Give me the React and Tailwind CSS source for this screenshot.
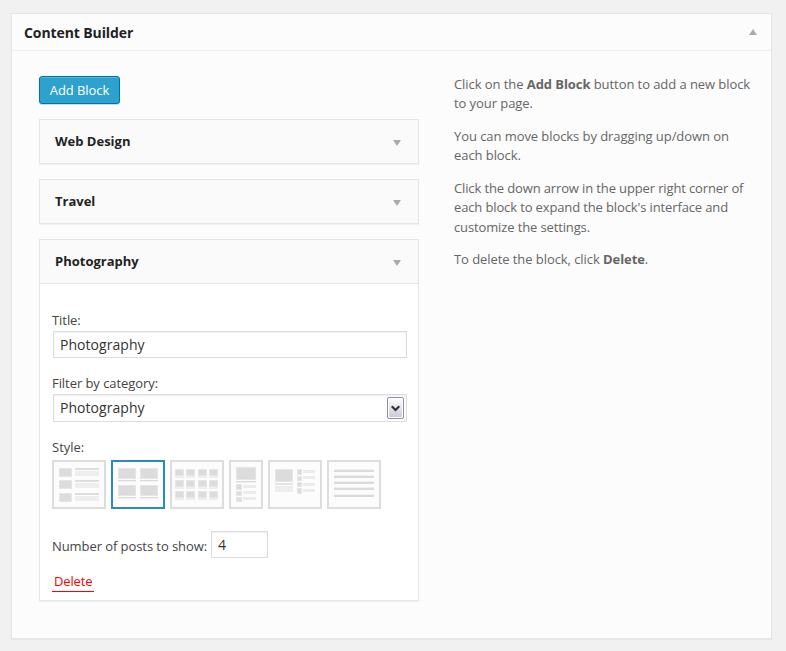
import React from "react";

function Thumb({ width, active, bars }) {
  return (
    <div
      className={
        "h-[49px] shrink-0 border-2 bg-[#fcfcfc] " +
        (active ? "border-[#298cba]" : "border-[#dddddd]")
      }
      style={{ width }}
    >
      <svg className="block" width={width - 4} height="45" shapeRendering="crispEdges">
        {bars.map(([x, y, w, h, fill], i) => (
          <rect key={i} x={x} y={y} width={w} height={h} fill={fill || "#dddddd"} />
        ))}
      </svg>
    </div>
  );
}

const LIGHT = "#eeeeee";
const MID = "#e6e6e6";

// A picture tile with a soft one-pixel rim.
const tile = (x, y, w, h) => [
  [x, y, w, h, MID],
  [x + 1, y + 1, w - 2, h - 2, "#dcdcdc"],
];

const listThumb = [6, 18, 31].flatMap((y) => [
  ...tile(5, y, 13, 9),
  [21, y, 24, 2, "#dedede"],
  [21, y + 3, 24, 5, LIGHT],
]);

const gridThumb = [
  [6, 18],
  [23, 35],
].flatMap(([y, line]) =>
  [5, 27].flatMap((x) => [
    ...tile(x, y, 18, 11),
    [x, line, 18, 1, "#dadada"],
    [x, line + 1, 18, 1, "#f3f3f3"],
  ])
);

const smallGridThumb = [7, 18, 29].flatMap((y) =>
  [3, 14, 26, 37].flatMap((x) => [...tile(x, y, 9, 7), [x, y + 7, 9, 2, LIGHT]])
);

const columnThumb = [
  ...tile(5, 5, 20, 13),
  [5, 19, 20, 1, "#dadada"],
  [5, 20, 20, 1, LIGHT],
  ...[
    [22, 6],
    [29, 5],
    [35, 5],
  ].flatMap(([y, h]) => tile(5, y, 6, h)),
  ...[23, 29, 35].map((y) => [12, y, 13, 3, "#ebebeb"]),
];

const featureThumb = [
  ...tile(5, 7, 18, 13),
  [5, 21, 18, 2, MID],
  [5, 24, 18, 6, LIGHT],
  ...[
    [7, 6],
    [14, 5],
    [20, 5],
    [26, 6],
  ].flatMap(([y, h]) => tile(27, y, 5, h)),
  ...[8, 14, 21, 27].map((y) => [33, y, 12, 3, "#ebebeb"]),
];

const linesThumb = [8, 14, 20, 26, 33].flatMap((y) => [
  [5, y - 1, 40, 1, "#f0f0f0"],
  [5, y, 40, 2, "#dadada"],
]);

function Triangle({ up }) {
  return (
    <svg width="8" height="6" className="block" fill="#aaaaaa">
      <path d={up ? "M4 0L8 6H0Z" : "M0 0H8L4 6Z"} />
    </svg>
  );
}

function BlockHeader({ title }) {
  return (
    <div className="flex h-[43px] items-center justify-between bg-[#fafafa] pl-[15px] pr-[17px]">
      <h3 className="pb-[2px] text-[13px] leading-[18px] font-bold text-[#222222]">{title}</h3>
      <div className="pt-[3px]">
        <Triangle />
      </div>
    </div>
  );
}

const blockClass =
  "border border-[#e5e5e5] bg-white shadow-[0_1px_1px_rgba(0,0,0,0.04)]";
const fieldClass =
  "border border-[#dddddd] bg-white text-[14px] tracking-[0.05px] text-[#333333] shadow-[inset_0_1px_2px_rgba(0,0,0,0.07)] outline-none";

export default function App() {
  return (
    <div className="h-[651px] w-[786px] overflow-hidden bg-[#f1f1f1] pt-[13px] pl-[11px] font-['Open_Sans',sans-serif] text-[13px] text-[#444444]">
      <section className="h-[626px] w-[761px] border border-[#e5e5e5] bg-[#fcfcfc] shadow-[0_1px_1px_rgba(0,0,0,0.04)]">
        <header className="flex h-[37px] items-center justify-between border-b border-[#eeeeee] pl-3 pr-[14px]">
          <h2 className="pt-[2px] text-[14px] leading-5 font-bold tracking-[-0.1px] text-[#222222]">
            Content Builder
          </h2>
          <Triangle up />
        </header>
        <div className="flex pl-[27px]">
          <div className="w-[380px] pt-[25px]">
            <button className="block h-7 w-[81px] rounded-[3px] border border-[#0074a2] bg-[#2ea2cc] text-center text-[13px] leading-[26px] tracking-[-0.08px] text-white shadow-[inset_0_1px_0_rgba(120,200,230,0.5),0_1px_0_rgba(0,0,0,0.15)]">
              Add Block
            </button>
            <div className="mt-[15px] flex flex-col gap-[15px]">
              <div className={blockClass}>
                <BlockHeader title="Web Design" />
              </div>
              <div className={blockClass}>
                <BlockHeader title="Travel" />
              </div>
              <div className={blockClass + " h-[362px]"}>
                <BlockHeader title="Photography" />
                <div className="border-t border-[#e5e5e5] pt-[26px] pl-3">
                  <label className="block pb-px leading-5 tracking-[-0.06px]">Title:</label>
                  <input
                    className={fieldClass + " ml-px block h-[27px] w-[354px] px-[6px]"}
                    defaultValue="Photography"
                  />
                  <label className="mt-[15px] block pb-px leading-5 tracking-[-0.06px]">
                    Filter by category:
                  </label>
                  <div
                    className={
                      fieldClass +
                      " ml-px flex h-7 w-[354px] items-center justify-between pl-[6px] pr-[2px]"
                    }
                  >
                    <span className="pb-[2px]">Photography</span>
                    <span className="flex h-[22px] w-[17px] items-center justify-center rounded-[2px] border border-[#8e8ea5] bg-linear-to-b from-white to-[#c8c8d8] shadow-[inset_0_0_0_1px_white]">
                      <svg width="9" height="7" fill="none" stroke="#303030" strokeWidth="2.2">
                        <path d="M0.7 1.2L4.5 5L8.3 1.2" />
                      </svg>
                    </span>
                  </div>
                  <div className="mt-[15px] leading-5">Style:</div>
                  <div className="mt-[3px] flex gap-[5px]">
                    <Thumb width={54} bars={listThumb} />
                    <Thumb width={54} bars={gridThumb} active />
                    <Thumb width={54} bars={smallGridThumb} />
                    <Thumb width={34} bars={columnThumb} />
                    <Thumb width={54} bars={featureThumb} />
                    <Thumb width={54} bars={linesThumb} />
                  </div>
                  <div className="mt-[22px] flex items-center">
                    <label className="w-[159px] pt-[3px] leading-5 tracking-[-0.07px] whitespace-nowrap">
                      Number of posts to show:
                    </label>
                    <input className={fieldClass + " h-[27px] w-[57px] px-[6px]"} defaultValue="4" />
                  </div>
                  <a className="mt-[14px] block h-5 w-[42px] border-b border-[#ff0000] px-[2px] leading-[18px] tracking-[-0.15px] text-[#ff0000]">
                    Delete
                  </a>
                </div>
              </div>
            </div>
          </div>
          <div className="ml-[35px] w-[304px] space-y-[13px] pt-[23.75px] leading-[19.5px] tracking-[-0.07px] text-[#666666]">
            <p>
              Click on the <b>Add Block</b> button to add a new block
              <br />
              to your page.
            </p>
            <p>
              You can move blocks by dragging up/down on
              <br />
              each block.
            </p>
            <p className="tracking-[-0.13px]">
              Click the down arrow in the upper right corner of
              <br />
              each block to expand the block's interface and
              <br />
              customize the settings.
            </p>
            <p>
              To delete the block, click <b>Delete</b>.
            </p>
          </div>
        </div>
      </section>
    </div>
  );
}
